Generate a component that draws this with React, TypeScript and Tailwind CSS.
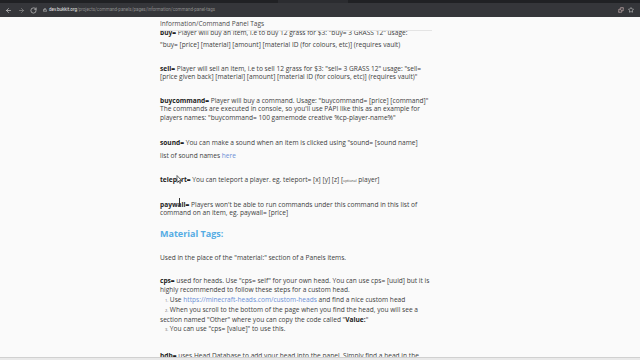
import { ArrowLeft, ArrowRight, RotateCw, Lock, Star, Puzzle } from 'lucide-react'

function BrowserBar() {
  return (
    <div className="h-[17px] shrink-0 bg-[#35363a] flex flex-col">
      <div className="h-[3px] bg-[#202124] flex">
        <div className="ml-[278px] w-[70px] bg-[#2b2c30]" />
      </div>
      <div className="flex-1 flex items-center px-[4px] text-[#c4c4c4]">
        <ArrowLeft className="h-[7px] w-[7px] ml-[1px]" strokeWidth={2.5} />
        <ArrowRight className="h-[7px] w-[7px] ml-[6px] text-[#8a8a8a]" strokeWidth={2.5} />
        <RotateCw className="h-[7px] w-[7px] ml-[5px]" strokeWidth={2.5} />
        <div className="ml-[6px] flex items-center gap-[2px] text-[4.5px] font-['Roboto']">
          <Lock className="h-[4px] w-[4px]" strokeWidth={3} />
          <span className="text-[#e8e8e8]">dev.bukkit.org</span>
          <span className="-ml-[2px] text-[#8d8d8d]">/projects/command-panels/pages/information/command-panel-tags</span>
        </div>
        <div className="ml-auto flex items-center gap-[4px] mr-[2px]">
          <Puzzle className="h-[6px] w-[6px] text-[#e6c7c7]" strokeWidth={2.5} />
          <Star className="h-[6px] w-[6px]" strokeWidth={2.5} />
        </div>
      </div>
    </div>
  )
}

function B({ children }: { children: React.ReactNode }) {
  return <span className="font-bold text-[#222]">{children}</span>
}

function Num({ n }: { n: number }) {
  return <span className="ml-[5px] mr-[1.5px] text-[4px] text-[#666]">{n}.</span>
}

export default function App() {
  return (
    <div className="w-[640px] h-[360px] overflow-hidden bg-[#fafafa] flex flex-col font-['Open_Sans',sans-serif]">
      <BrowserBar />
      <div className="relative flex-1 overflow-hidden">
        <div className="absolute top-0 left-0 right-0 h-[14px] bg-[#fafafa] z-10">
          <div className="ml-[160px] w-[272px] h-[14px] border-b border-[#e4e4e4] flex items-center text-[6.5px] text-[#4a4a4a]">
            Information/Command Panel Tags
          </div>
        </div>

        <div className="ml-[160px] w-[300px] pt-[11.75px] text-[6.6px] leading-[8.5px] text-[#404040]">
          <p><B>buy=</B> Player will buy an item, i.e to buy 12 grass for $3: "buy= 3 GRASS 12" usage:</p>
          <p className="mt-[3.5px]">"buy= [price] [material] [amount] [material ID (for colours, etc)] (requires vault)</p>

          <p className="mt-[15.5px]">
            <B>sell=</B> Player will sell an item, i.e to sell 12 grass for $3: "sell= 3 GRASS 12" usage: "sell=<br />
            [price given back] [material] [amount] [material ID (for colours, etc)] (requires vault)"
          </p>

          <p className="mt-[14.75px]">
            <B>buycommand=</B> Player will buy a command. Usage: "buycommand= [price] [command]"<br />
            The commands are executed in console, so you'll use PAPI like this as an example for<br />
            players names: "buycommand= 100 gamemode creative %cp-player-name%"
          </p>

          <p className="mt-[17px]"><B>sound=</B> You can make a sound when an item is clicked using "sound= [sound name]</p>
          <p className="mt-[4.25px]">list of sound names <span className="text-[#6b8fd6]">here</span></p>

          <p className="relative mt-[15.5px]">
            <B>teleport=</B> You can teleport a player. eg. teleport= [x] [y] [z] [<span className="text-[3.5px]">optional</span> player]
            <svg className="absolute left-[16px] top-[-1px] h-[9px] w-[6px]" viewBox="0 0 6 9">
              <path d="M1 0.5 L1 7.5 L2.6 6 L3.8 8.5 L4.8 8 L3.6 5.6 L5.6 5.6 Z" fill="#fff" stroke="#111" strokeWidth="0.6" />
            </svg>
          </p>

          <p className="relative mt-[15.5px]">
            <B>paywall=</B> Players won't be able to run commands under this command in this list of<br />
            command on an item, eg. paywall= [price]
            <span className="absolute left-[19px] top-[-3px] h-[8px] w-[1px] bg-[#333]" />
          </p>

          <h2 className="mt-[9.5px] text-[9px] leading-[13px] font-bold text-[#55ace4]">Material Tags:</h2>

          <p className="mt-[13.5px]">Used in the place of the "material:" section of a Panels items.</p>

          <p className="mt-[14.75px]">
            <B>cps=</B> used for heads. Use "cps= self" for your own head. You can use cps= [uuid] but it is<br />
            highly recommended to follow these steps for a custom head.
          </p>

          <ol className="mt-[1px] leading-[9px]">
            <li><Num n={1} />Use <span className="text-[#6b8fd6]">https://minecraft-heads.com/custom-heads</span> and find a nice custom head</li>
            <li><Num n={2} />When you scroll to the bottom of the page when you find the head, you will see a<br />section named "Other" where you can copy the code called "<B>Value:</B>"</li>
            <li><Num n={3} />You can use "cps= [value]" to use this.</li>
          </ol>

          <p className="mt-[17.5px]">
            <B>hdb=</B> uses Head Database to add your head into the panel. Simply find a head in the<br />
            database and use it.
          </p>
        </div>
      </div>
      <div className="h-[3px] shrink-0 bg-[#e9e9e9] border-t border-[#d0d0d0]" />
    </div>
  )
}
